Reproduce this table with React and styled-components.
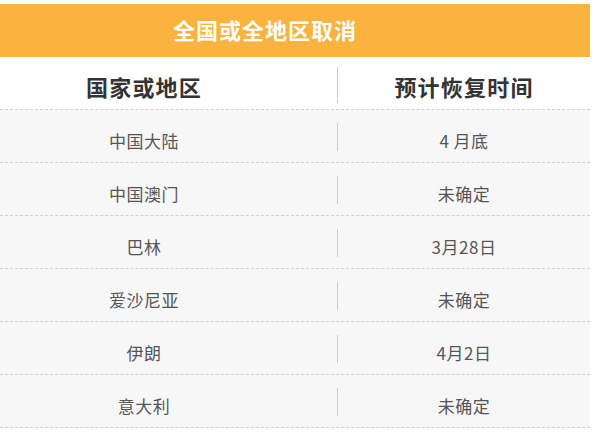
import React from "react";
import styled, { createGlobalStyle } from "styled-components";

const GlobalStyle = createGlobalStyle`
  body {
    margin: 0;
    background: #fff;
    font-family: "Noto Sans CJK SC", "Noto Sans", sans-serif;
  }
`;

const Table = styled.div`
  width: 590px;
  margin-top: 4px;
`;

// title sits left of the true center in the original
const Title = styled.div`
  height: 53px;
  box-sizing: border-box;
  background: #fab33f;
  color: #fff;
  font-size: 22px;
  font-weight: 700;
  letter-spacing: 1px;
  display: flex;
  align-items: center;
  justify-content: center;
  padding-right: 60px;
  padding-bottom: 4px;
`;

const Row = styled.div`
  height: 52px;
  display: flex;
  align-items: center;
  background: ${(p) => (p.head ? "#fff" : "#f7f7f7")};
  border-bottom: 1px dashed #cfcfcf;
`;

// left column sits a bit off-center, the divider comes after a gap
const Cell = styled.div`
  flex: ${(p) => (p.first ? "0 0 288px" : "1")};
  margin-right: ${(p) => (p.first ? "49px" : "0")};
  padding-top: ${(p) => (p.head ? "5px" : "8px")};
  text-align: center;
  color: ${(p) => (p.head ? "#333" : "#555")};
  font-size: ${(p) => (p.head ? "22px" : "17px")};
  font-weight: ${(p) => (p.head ? 700 : 400)};
  letter-spacing: ${(p) => (p.head ? "1.2px" : "0.5px")};
`;

const Divider = styled.div`
  flex: 0 0 1px;
  height: ${(p) => (p.head ? "36px" : "28px")};
  margin-top: ${(p) => (p.head ? "4px" : "2px")};
  background: #cccccc;
`;

const rows = [
  ["中国大陆", "4 月底"],
  ["中国澳门", "未确定"],
  ["巴林", "3月28日"],
  ["爱沙尼亚", "未确定"],
  ["伊朗", "4月2日"],
  ["意大利", "未确定"],
];

export default function App() {
  return (
    <>
      <GlobalStyle />
      <Table>
        <Title>全国或全地区取消</Title>
        <Row head>
          <Cell first head>国家或地区</Cell>
          <Divider head />
          <Cell head>预计恢复时间</Cell>
        </Row>
        {rows.map(([place, date]) => (
          <Row key={place}>
            <Cell first>{place}</Cell>
            <Divider />
            <Cell>{date}</Cell>
          </Row>
        ))}
      </Table>
    </>
  );
}
